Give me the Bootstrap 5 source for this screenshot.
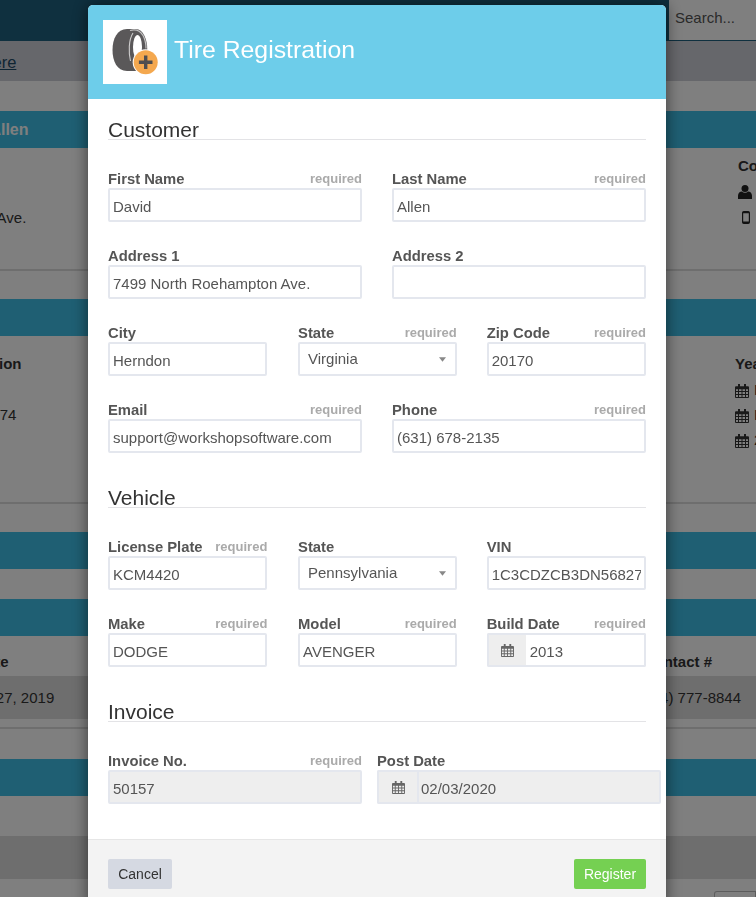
<!DOCTYPE html>
<html lang="en">
<head>
<meta charset="utf-8">
<title>Tire Registration</title>
<link rel="stylesheet" href="https://cdn.jsdelivr.net/npm/bootstrap@5.3.0/dist/css/bootstrap.min.css">
<style>
html,body{height:897px;overflow:hidden}
body{font-family:"Liberation Sans",Arial,sans-serif;font-size:14px;color:#333;background:#fff}
/* page behind the dialog */
.topbar{height:41px;background:#1e607e;justify-content:flex-end}
.searchbox{width:87px;height:40px;background:#fff;color:#555;padding:7px 6px;margin-bottom:1px;font-size:15px}
.linkstrip{height:40px;background:#cdced6;padding-top:9px;font-size:16.500px}
.linkstrip a{color:#1f4a66;margin-left:-57px;display:inline-block}
.band{height:37px;background:#3ebee6;color:#fff;font-weight:700;font-size:16px;padding-top:7px}
.band span{display:inline-block;margin-left:-58px}
.gap30{height:30px}
.gap28{height:28px}
.gap40{height:40px}
.sect-a{height:121px}
.sect-b{height:166px}
.rule{height:2px;background:#ddd}
.pane{display:flex;justify-content:space-between;overflow:hidden;font-size:15px;color:#333}
.strong{font-weight:700}
.sect-a .rightc{width:18px;padding-top:7px;overflow:hidden;white-space:nowrap}
.sect-a .leftc{padding-top:59px;margin-left:-171px;white-space:nowrap}
.sect-a .rightc div{height:25px}
.sect-b .leftc{padding-top:17px;white-space:nowrap;margin-left:-66px}
.sect-b .val{margin-top:28px;margin-left:49px}
.sect-b .rightc{width:21px;padding-top:17px;white-space:nowrap;overflow:hidden}
.sect-b .rightc .cal{height:25px;display:flex;align-items:center;gap:5px}
.sect-b .rightc .cal svg{flex:none;color:#333}
.sect-b .rightc .strong{height:25px}
.tablehead{height:40px;display:flex;justify-content:space-between;font-weight:700;font-size:15px;padding-top:15px;overflow:hidden;white-space:nowrap}
.tablerow{height:43px;background:#ddd;display:flex;justify-content:space-between;font-size:15px;padding-top:11px;overflow:hidden;white-space:nowrap}
.tablehead .l{margin-left:-24px}.tablerow .l{margin-left:-35px}
.tablehead .r{margin-right:44px}.tablerow .r{margin-right:15px}
.shim8{height:8px}
.ghostbtn{height:6px;width:42px;border:1px solid #bbb;border-bottom:0;border-radius:3px 0 0 0;margin:12px 0 0 auto}
/* backdrop + dialog */
.dimmer{position:fixed;inset:0;background:rgba(0,0,0,.5);overflow:hidden;z-index:1050}
.sheet{position:absolute;left:88px;top:5px;width:578px;border:0;border-radius:5px 5px 0 0;background:#fff;box-shadow:0 0 16px rgba(0,0,0,.55);overflow:visible}
.sheet-head{background:#6dcdea;padding:15px;border:0;border-radius:5px 5px 0 0;justify-content:flex-start;gap:7px}
.logo-tile{width:64px;height:64px;background:#fff;flex:none}
.sheet-title{color:#fff;font-size:24.800px;line-height:1;margin:0 0 4px;font-weight:400}
.sheet-body{padding:20px 20px 12px}
.sec-h{font-size:21px;line-height:22px;height:21px;font-weight:400;color:#333;border-bottom:1px solid #e3e3e6;margin:0 0 28px}
.sec-h.later{margin-top:11px}
.frow{--bs-gutter-x:30px;--bs-gutter-y:0}
.fgroup{margin-bottom:23px}
.midcol{padding-left:15.700px}
.flabel{display:flex;justify-content:space-between;align-items:flex-start;height:20px;margin:0;font-weight:700;font-size:14.800px;line-height:22px;color:#555}
.flabel i{font-style:normal;font-size:13px;color:#aaa;line-height:21px}
.fctl{height:34px;border:2px solid #e4e7ee;border-radius:2px;padding:5px 3px 3px;font-size:15px;line-height:22px;color:#555;background-color:#fff;box-shadow:none}
.fctl:disabled{background:#eee;color:#555;opacity:1}
.fsel{padding:3px 8px;background-size:7px 5px;background-position:right 9px center;background-image:url("data:image/svg+xml,%3Csvg xmlns='http://www.w3.org/2000/svg' viewBox='0 0 8 5'%3E%3Cpath fill='%23888' d='M0 0h8L4 5z'/%3E%3C/svg%3E")}
.fadd{height:34px;width:40px;justify-content:center;background:#eee;border:2px solid #e4e7ee;border-right:0;border-radius:2px 0 0 2px;padding:0}
.fgrp .fctl{border-left-width:0;border-radius:0 2px 2px 0;padding-left:4px}
.fgrp .fctl:disabled{border-left:2px solid #e4e7ee;padding-left:2px;margin-left:0!important}
.wide-end{padding-left:0;padding-right:0}
.sheet-foot{background:#f3f3f3;border-top:1px solid #e6e6e6;padding:19px 20px 20px;justify-content:space-between;border-radius:0}
.sheet-foot .btn{height:30px;margin:0;padding:0;font-size:14px;border-radius:2px;border:0}
.btn-quit{width:64px;background:#d5d9e2;color:#333}
.btn-save{width:72px;background:#75d052;color:#fff}
.calglyph{color:#666}
</style>
</head>
<body>
<svg width="0" height="0" class="d-block" aria-hidden="true">
  <symbol id="cal" viewBox="0 0 14 14"><path fill="currentColor" fill-rule="evenodd" d="M3 0h2v2.200h4V0h2v2.200h2a1 1 0 0 1 1 1V13a1 1 0 0 1-1 1H1a1 1 0 0 1-1-1V3.200a1 1 0 0 1 1-1h2zM1 5.200V7h2V5.200zm3 0V7h2.500V5.200zm3.500 0V7H10V5.200zm3.500 0V7h2V5.200zM1 8v2h2V8zm3 0v2h2.500V8zm3.500 0v2H10V8zm3.500 0v2h2V8zM1 11v2h2v-2zm3 0v2h2.500v-2zm3.500 0v2H10v-2zm3.500 0v2h2v-2z"/></symbol>
</svg>

<nav class="d-flex topbar"><div class="searchbox">Search...</div></nav>
<div class="linkstrip"><a href="#">Click here</a></div>
<div class="gap30"></div>
<div class="band"><span>David Allen</span></div>
<div class="pane sect-a">
  <div class="leftc">7499 North Roehampton Ave.</div>
  <div class="rightc">
    <div class="strong">Contact</div>
    <div><svg width="14" height="14" viewBox="0 0 14 14"><circle cx="7" cy="3.600" r="3.500" fill="#222"/><path fill="#222" d="M0 14v-3.200C0 8 2 6.500 3.800 6.500 4.800 7.300 5.900 7.700 7 7.700s2.200-.4 3.200-1.200C12 6.500 14 8 14 10.800V14z"/></svg></div>
    <div class="ps-1"><svg width="8" height="13" viewBox="0 0 8 13"><rect x=".6" y=".6" width="6.800" height="11.800" rx="1.200" fill="none" stroke="#222" stroke-width="1.200"/><path fill="#222" d="M1 1h6v1.200H1zM1 10.500h6v1.500H1z"/></svg></div>
  </div>
</div>
<div class="rule"></div>
<div class="gap28"></div>
<div class="band"></div>
<div class="pane sect-b">
  <div class="leftc"><div class="strong">Registration</div><div class="val">1874</div></div>
  <div class="rightc">
    <div class="strong">Year</div>
    <div class="cal"><svg width="14" height="14"><use href="#cal"/></svg>N</div>
    <div class="cal"><svg width="14" height="14"><use href="#cal"/></svg>N</div>
    <div class="cal"><svg width="14" height="14"><use href="#cal"/></svg>2</div>
  </div>
</div>
<div class="rule"></div>
<div class="gap28"></div>
<div class="band"></div>
<div class="gap30"></div>
<div class="band"></div>
<div class="tablehead"><span class="l">Date</span><span class="r">Contact #</span></div>
<div class="tablerow"><span class="l">Nov 27, 2019</span><span class="r">(614) 777-8844</span></div>
<div class="shim8"></div>
<div class="rule"></div>
<div class="gap30"></div>
<div class="band"></div>
<div class="gap40"></div>
<div class="tablerow"></div>
<div class="ghostbtn"></div>

<div class="dimmer">
  <div class="modal-content sheet">
    <div class="modal-header sheet-head">
      <div class="logo-tile">
        <svg width="64" height="64" viewBox="0 0 64 64">
          <path fill="#5a5859" d="M24 9C14 9 9.500 19 9.500 30S14 51 24 51h9c7 0 11.300-10 11.300-21S40 9 33 9z"/>
          <ellipse cx="34.500" cy="27" rx="4.500" ry="12" fill="#fff"/>
          <path fill="none" stroke="#c4c3c3" stroke-width="1.200" d="M27 10.500c5-1.500 10 0 13 5 2 3.500 3 8 3 13"/>
          <path fill="none" stroke="#cfcece" stroke-width="1.100" d="M27.500 41c-2-9-2-21 2.500-28"/>
          <circle cx="42.700" cy="42.300" r="13" fill="#fff"/>
          <circle cx="42.700" cy="42.300" r="12" fill="#f4a84f"/>
          <path fill="#4f4e50" d="M41 35.500h3.400V40.600h5.100V44h-5.100v5.100H41V44h-5.100v-3.400H41z"/>
        </svg>
      </div>
      <h1 class="sheet-title">Tire Registration</h1>
    </div>
    <div class="modal-body sheet-body">
      <h2 class="sec-h">Customer</h2>
      <div class="row frow">
        <div class="col-6 fgroup"><label class="flabel">First Name <i>required</i></label><input class="form-control fctl" value="David"></div>
        <div class="col-6 fgroup"><label class="flabel">Last Name <i>required</i></label><input class="form-control fctl" value="Allen"></div>
        <div class="col-6 fgroup"><label class="flabel">Address 1</label><input class="form-control fctl" value="7499 North Roehampton Ave."></div>
        <div class="col-6 fgroup"><label class="flabel">Address 2</label><input class="form-control fctl" value=""></div>
        <div class="col-4 fgroup"><label class="flabel">City</label><input class="form-control fctl" value="Herndon"></div>
        <div class="col-4 fgroup midcol"><label class="flabel">State <i>required</i></label><select class="form-select fctl fsel"><option>Virginia</option></select></div>
        <div class="col-4 fgroup"><label class="flabel">Zip Code <i>required</i></label><input class="form-control fctl" value="20170"></div>
        <div class="col-6 fgroup"><label class="flabel">Email <i>required</i></label><input class="form-control fctl" value="support@workshopsoftware.com"></div>
        <div class="col-6 fgroup"><label class="flabel">Phone <i>required</i></label><input class="form-control fctl" value="(631) 678-2135"></div>
      </div>
      <h2 class="sec-h later">Vehicle</h2>
      <div class="row frow">
        <div class="col-4 fgroup"><label class="flabel">License Plate <i>required</i></label><input class="form-control fctl" value="KCM4420"></div>
        <div class="col-4 fgroup midcol"><label class="flabel">State</label><select class="form-select fctl fsel"><option>Pennsylvania</option></select></div>
        <div class="col-4 fgroup"><label class="flabel">VIN</label><input class="form-control fctl" value="1C3CDZCB3DN568274"></div>
        <div class="col-4 fgroup"><label class="flabel">Make <i>required</i></label><input class="form-control fctl" value="DODGE"></div>
        <div class="col-4 fgroup midcol"><label class="flabel">Model <i>required</i></label><input class="form-control fctl" value="AVENGER"></div>
        <div class="col-4 fgroup"><label class="flabel">Build Date <i>required</i></label>
          <div class="input-group fgrp"><span class="input-group-text fadd"><svg class="calglyph" width="13" height="13"><use href="#cal"/></svg></span><input class="form-control fctl" value="2013"></div></div>
      </div>
      <h2 class="sec-h later">Invoice</h2>
      <div class="row frow">
        <div class="col-6 fgroup"><label class="flabel">Invoice No. <i>required</i></label><input class="form-control fctl" value="50157" disabled></div>
        <div class="col-6 fgroup wide-end"><label class="flabel">Post Date</label>
          <div class="input-group fgrp"><span class="input-group-text fadd"><svg class="calglyph" width="13" height="13"><use href="#cal"/></svg></span><input class="form-control fctl" value="02/03/2020" disabled></div></div>
      </div>
    </div>
    <div class="modal-footer sheet-foot">
      <button type="button" class="btn btn-quit">Cancel</button>
      <button type="button" class="btn btn-save">Register</button>
    </div>
  </div>
</div>
<script src="https://cdn.jsdelivr.net/npm/bootstrap@5.3.0/dist/js/bootstrap.bundle.min.js"></script>
</body>
</html>
